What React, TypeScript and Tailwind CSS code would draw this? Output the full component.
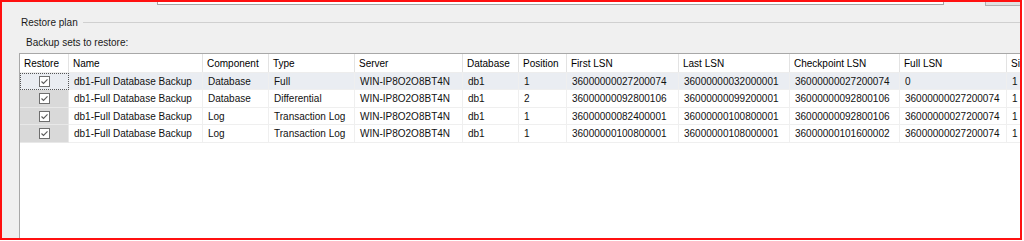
import React from "react";

type Col = { title: string; w: string };

const columns: Col[] = [
  { title: "Restore", w: "w-[49px]" },
  { title: "Name", w: "w-[134px]" },
  { title: "Component", w: "w-[66px]" },
  { title: "Type", w: "w-[86px]" },
  { title: "Server", w: "w-[108px]" },
  { title: "Database", w: "w-[56px]" },
  { title: "Position", w: "w-[48px]" },
  { title: "First LSN", w: "w-[112px]" },
  { title: "Last LSN", w: "w-[111px]" },
  { title: "Checkpoint LSN", w: "w-[110px]" },
  { title: "Full LSN", w: "w-[107px]" },
  { title: "Size", w: "w-[60px]" },
];

const rows = [
  {
    h: "h-[17px]",
    cells: ["db1-Full Database Backup", "Database", "Full", "WIN-IP8O2O8BT4N", "db1", "1", "36000000027200074", "36000000032000001", "36000000027200074", "0", "1"],
  },
  {
    h: "h-[18px]",
    cells: ["db1-Full Database Backup", "Database", "Differential", "WIN-IP8O2O8BT4N", "db1", "2", "36000000092800106", "36000000099200001", "36000000092800106", "36000000027200074", "1"],
  },
  {
    h: "h-[17px]",
    cells: ["db1-Full Database Backup", "Log", "Transaction Log", "WIN-IP8O2O8BT4N", "db1", "1", "36000000082400001", "36000000100800001", "36000000092800106", "36000000027200074", "1"],
  },
  {
    h: "h-[18px]",
    cells: ["db1-Full Database Backup", "Log", "Transaction Log", "WIN-IP8O2O8BT4N", "db1", "1", "36000000100800001", "36000000108000001", "36000000101600002", "36000000027200074", "1"],
  },
];

function CheckBox() {
  return (
    <svg width="11" height="11" viewBox="0 0 11 11">
      <rect x="0.5" y="0.5" width="10" height="10" fill="#ffffff" stroke="#6e6e6e" />
      <path d="M2.5 5.5 L4.5 7.5 L8.5 3.3" fill="none" stroke="#5a5a5a" strokeWidth="1.1" />
    </svg>
  );
}

export default function App() {
  return (
    <div className="w-[1024px] h-[241px] bg-white">
      <div className="w-[1022px] h-[240px] border-2 border-[#ff1010] bg-[#f0f0f0] overflow-hidden flex flex-col font-['Liberation_Sans',Arial,sans-serif] text-[10px] text-black">
        {/* top strip: bottom of text box and button above */}
        <div className="h-[4px] flex items-end shrink-0">
          <div className="ml-[155px] w-[787px] h-[20px] shrink-0 border border-[#a5a5a5] bg-white mb-[1px]" />
          <div className="ml-[41px] w-[40px] h-[20px] shrink-0 border border-[#b0b0b0] bg-[#e1e1e1]" />
        </div>

        {/* group box header */}
        <div className="mt-[11px] h-[12px] pl-[19px] flex items-center gap-[5px] shrink-0">
          <span className="leading-[12px] text-[#1a1a1a]">Restore plan</span>
          <div className="flex-1 h-px bg-[#d0d0d0] mb-[2px]" />
        </div>

        <div className="mt-[8px] h-[12px] pl-[24px] flex items-center shrink-0">
          <span className="leading-[12px] text-[#1a1a1a]">Backup sets to restore:</span>
        </div>

        {/* grid */}
        <div className="mt-[4px] ml-[17px] flex-1 bg-white border-l border-t border-[#a8a8a8] flex flex-col">
          <div className="h-[19px] flex shrink-0 border-b border-[#ededed]">
            {columns.map((c) => (
              <div
                key={c.title}
                className={`${c.w} shrink-0 h-full border-r border-[#e3e3e3] pl-[4px] flex items-center whitespace-nowrap overflow-hidden`}
              >
                {c.title}
              </div>
            ))}
          </div>

          {rows.map((r, i) => (
            <div key={i} className={`${r.h} flex shrink-0 ${i === 0 ? "bg-[#eaedf2]" : "bg-white"}`}>
              <div
                className={`w-[49px] shrink-0 h-full flex items-center justify-center ${
                  i === 0 ? "border border-dotted border-[#555]" : "bg-[#d9d9d9] border-b border-r border-[#e8e8e8]"
                }`}
              >
                <CheckBox />
              </div>
              {r.cells.map((v, j) => (
                <div
                  key={j}
                  className={`${columns[j + 1].w} shrink-0 h-full border-r border-b border-[#efefef] pl-[5px] flex items-center whitespace-nowrap overflow-hidden text-[#111]`}
                >
                  {v}
                </div>
              ))}
            </div>
          ))}
        </div>
      </div>
    </div>
  );
}
